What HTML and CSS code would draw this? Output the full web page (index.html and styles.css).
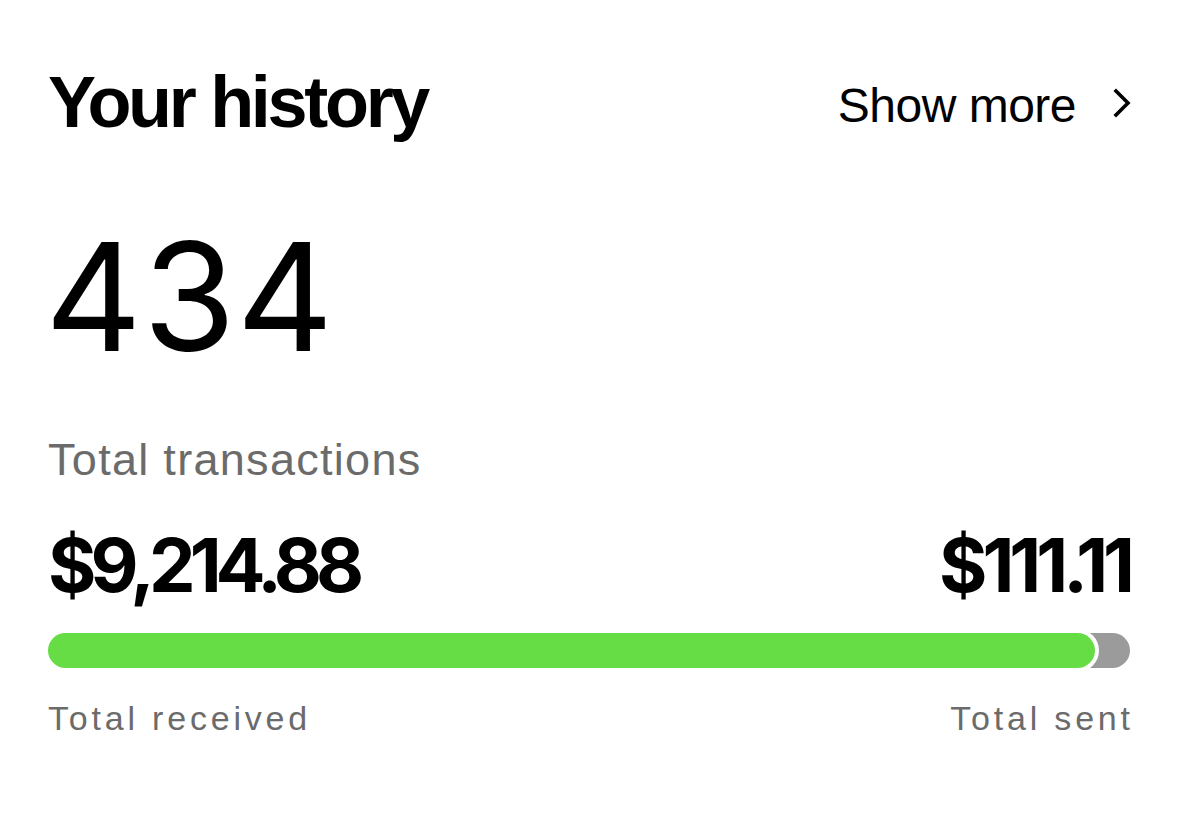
FILE: index.html
```html
<!DOCTYPE html>
<html lang="en">
<head>
<meta charset="utf-8">
<title>Your history</title>
<link rel="stylesheet" href="styles.css">
</head>
<body>
<main class="card">
  <header class="header">
    <h1 class="title">Your history</h1>
    <a class="show-more" href="#">
      <span class="show-more-text">Show more</span>
      <svg class="chevron" width="20" height="30" viewBox="0 0 20 30" aria-hidden="true">
        <path d="M4 3 L16 15 L4 27" fill="none" stroke="#000" stroke-width="3.6" stroke-linecap="square" stroke-linejoin="miter"/>
      </svg>
    </a>
  </header>
  <div class="count">434</div>
  <div class="count-label">Total transactions</div>
  <div class="amounts">
    <span class="amount">$9,214.88</span>
    <span class="amount amount-sent">$111.11</span>
  </div>
  <div class="bar">
    <div class="bar-fill" style="width: 96.8%"></div>
  </div>
  <div class="labels">
    <span class="label">Total received</span>
    <span class="label">Total sent</span>
  </div>
</main>
</body>
</html>
```

FILE: styles.css
```css
* {
  box-sizing: border-box;
}

html, body {
  margin: 0;
  padding: 0;
  background: #ffffff;
}

body {
  font-family: "Liberation Sans", Arial, Helvetica, sans-serif;
  color: #000000;
}

.card {
  padding: 66px 49px 0 48px;
  display: flex;
  flex-direction: column;
}

.header {
  display: flex;
  justify-content: space-between;
  align-items: flex-start;
}

.title {
  margin: 0;
  font-size: 72px;
  line-height: 72px;
  font-weight: 700;
  letter-spacing: -3.3px;
}

.show-more {
  margin-top: 16px;
  display: flex;
  align-items: center;
  gap: 36px;
  color: #000000;
  text-decoration: none;
}

.show-more-text {
  font-size: 48px;
  line-height: 48px;
  letter-spacing: -0.5px;
}

.chevron {
  display: block;
  margin-bottom: 6px;
  margin-right: -2px;
}

.count {
  margin-top: 84px;
  margin-left: -3px;
  font-family: Inter, "Liberation Sans", Arial, sans-serif;
  font-size: 150px;
  line-height: 150px;
  font-weight: 400;
  letter-spacing: 1px;
}

.count-label {
  margin-top: 65px;
  font-size: 45px;
  line-height: 45px;
  color: #6b6b6b;
  letter-spacing: 1.3px;
}

.amounts {
  margin-top: 46px;
  display: flex;
  justify-content: space-between;
  align-items: baseline;
}

.amount {
  font-family: Inter, "Liberation Sans", Arial, sans-serif;
  font-size: 74px;
  line-height: 75px;
  font-weight: 700;
  letter-spacing: -6px;
}

.amount-sent {
  letter-spacing: -5px;
  margin-right: 0;
}

.bar {
  margin-top: 30px;
  height: 35px;
  border-radius: 18px;
  background: #9b9b9b;
  position: relative;
}

.bar-fill {
  height: 35px;
  border-radius: 18px;
  background: #66dd44;
  box-shadow: 0 0 0 4px #ffffff;
}

.labels {
  margin-top: 33px;
  display: flex;
  justify-content: space-between;
}

.label {
  font-size: 34px;
  line-height: 34px;
  color: #6b6b6b;
  letter-spacing: 3.8px;
  margin-right: -3.8px;
}
```
